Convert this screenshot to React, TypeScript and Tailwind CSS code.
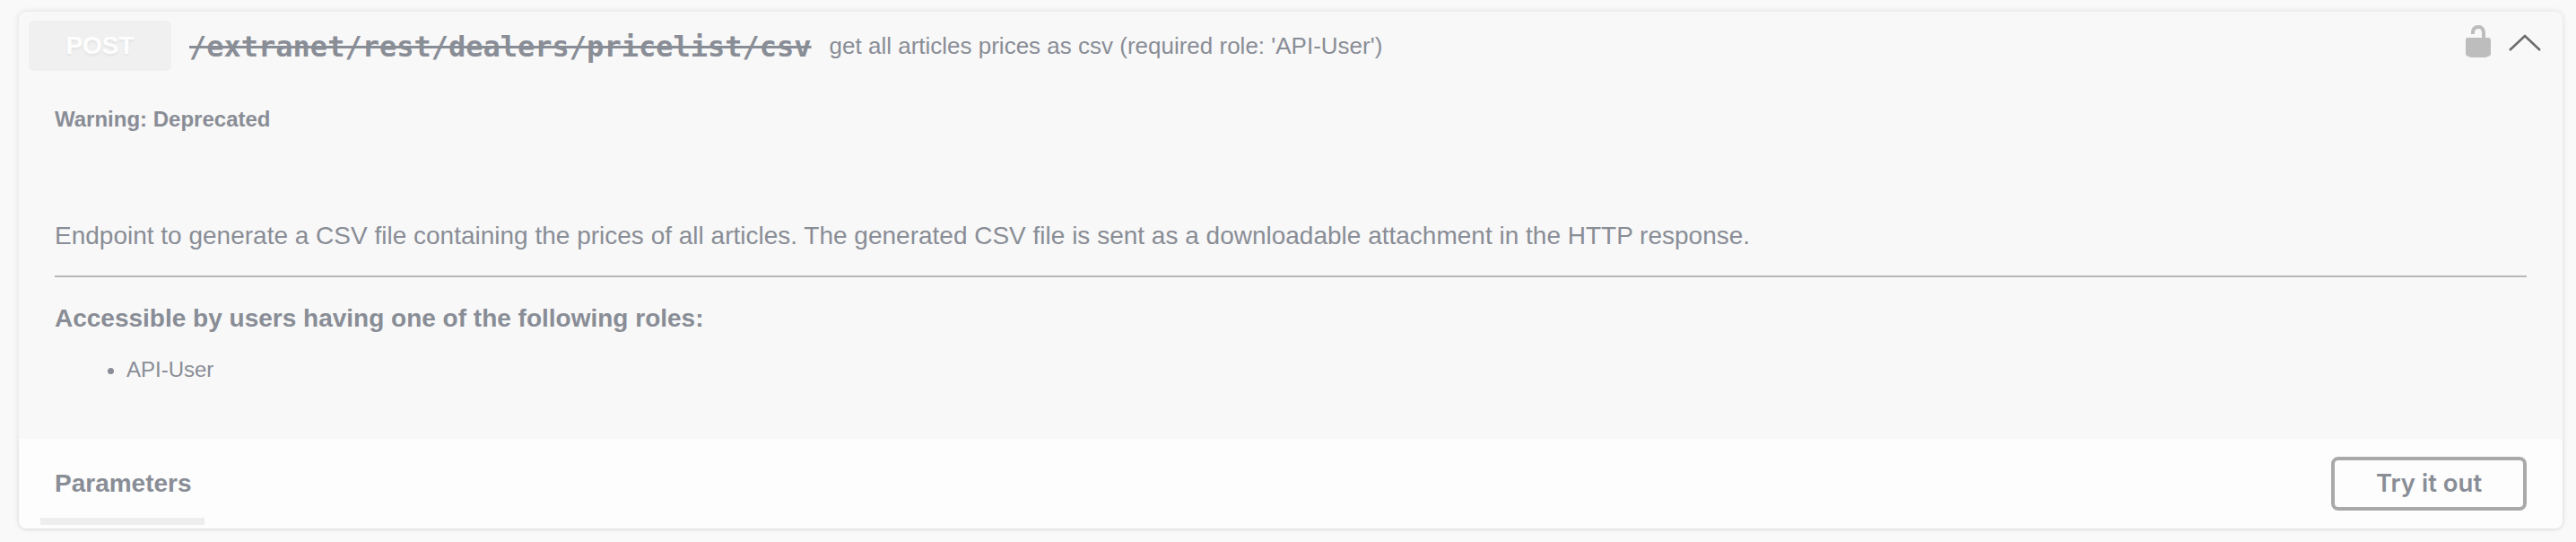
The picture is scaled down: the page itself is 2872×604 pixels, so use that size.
const App = () => {
  return (
    <div className="h-[604px] w-[2872px] overflow-hidden bg-[#f9f9f9] pt-[13px] pl-[21px] font-['Liberation_Sans',sans-serif] text-[#898d96]">
      <div className="relative w-[2836px] rounded-[8px] bg-[#f8f8f8] shadow-[0_0_6px_rgba(0,0,0,0.12)]">
        <div className="flex h-[76px] items-center pl-[11px] pr-[22px]">
          <div className="flex h-[56px] w-[159px] items-center justify-center rounded-[6px] bg-[#f0f0f0] text-[28px] font-bold text-[#fdfdfd] [text-shadow:0_2px_3px_rgba(0,0,0,0.06)]">
            POST
          </div>
          <span className="ml-[20px] pt-[2px] font-['DejaVu_Sans_Mono',monospace] text-[32px] font-bold leading-none line-through">
            /extranet/rest/dealers/pricelist/csv
          </span>
          <span className="ml-[20px] text-[26px]">get all articles prices as csv (required role: 'API-User')</span>
          <svg className="ml-auto -mt-[10px] h-[40px] w-[40px] fill-[#bdbdbd]" viewBox="0 0 20 20">
            <path d="M15.8 8H14V5.6C14 2.703 12.665 1 10 1 7.334 1 6 2.703 6 5.6V6h2v-.801C8 3.754 8.797 3 10 3c1.203 0 2 .754 2 2.199V8H4c-.553 0-1 .646-1 1.199V17c0 .549.428 1.139.951 1.307l1.197.387C5.672 18.861 6.55 19 7.1 19h5.8c.549 0 1.428-.139 1.951-.307l1.196-.387c.524-.167.953-.757.953-1.306V9.199C17 8.646 16.352 8 15.8 8z" />
          </svg>
          <svg className="ml-[12px] h-[40px] w-[40px]" viewBox="0 0 40 40" fill="none">
            <polyline points="3,25 20,9 37,25" stroke="#6b6b6b" strokeWidth="2.5" />
          </svg>
        </div>

        <div className="h-[400px] px-[40px]">
          <p className="pt-[30px] text-[24px] font-bold leading-[28px]">Warning: Deprecated</p>
          <p className="mt-[96px] text-[28px] leading-[40px]">
            Endpoint to generate a CSV file containing the prices of all articles. The generated CSV file is sent as a downloadable attachment in the HTTP response.
          </p>
          <hr className="mt-[24px] border-t-[2px] border-[#b8b8b8]" />
          <p className="mt-[26px] text-[28px] font-bold leading-[40px]">Accessible by users having one of the following roles:</p>
          <ul className="mt-[19px] list-disc pl-[80px] text-[24px] leading-[36px]">
            <li>API-User</li>
          </ul>
        </div>

        <div className="relative flex h-[100px] items-center justify-between rounded-b-[8px] bg-[#fdfdfd] pl-[40px] pr-[40px] shadow-[0_1px_3px_rgba(0,0,0,0.06)]">
          <h4 className="text-[28px] font-bold">Parameters</h4>
          <button className="h-[60px] w-[218px] rounded-[8px] border-[4px] border-[#a9a9a9] font-['Inter',sans-serif] text-[27.5px] font-semibold">
            Try it out
          </button>
          <div className="absolute bottom-[4px] left-[24px] h-[8px] w-[183px] bg-[#eeeeee]" />
        </div>
      </div>
    </div>
  );
};

export default App;
